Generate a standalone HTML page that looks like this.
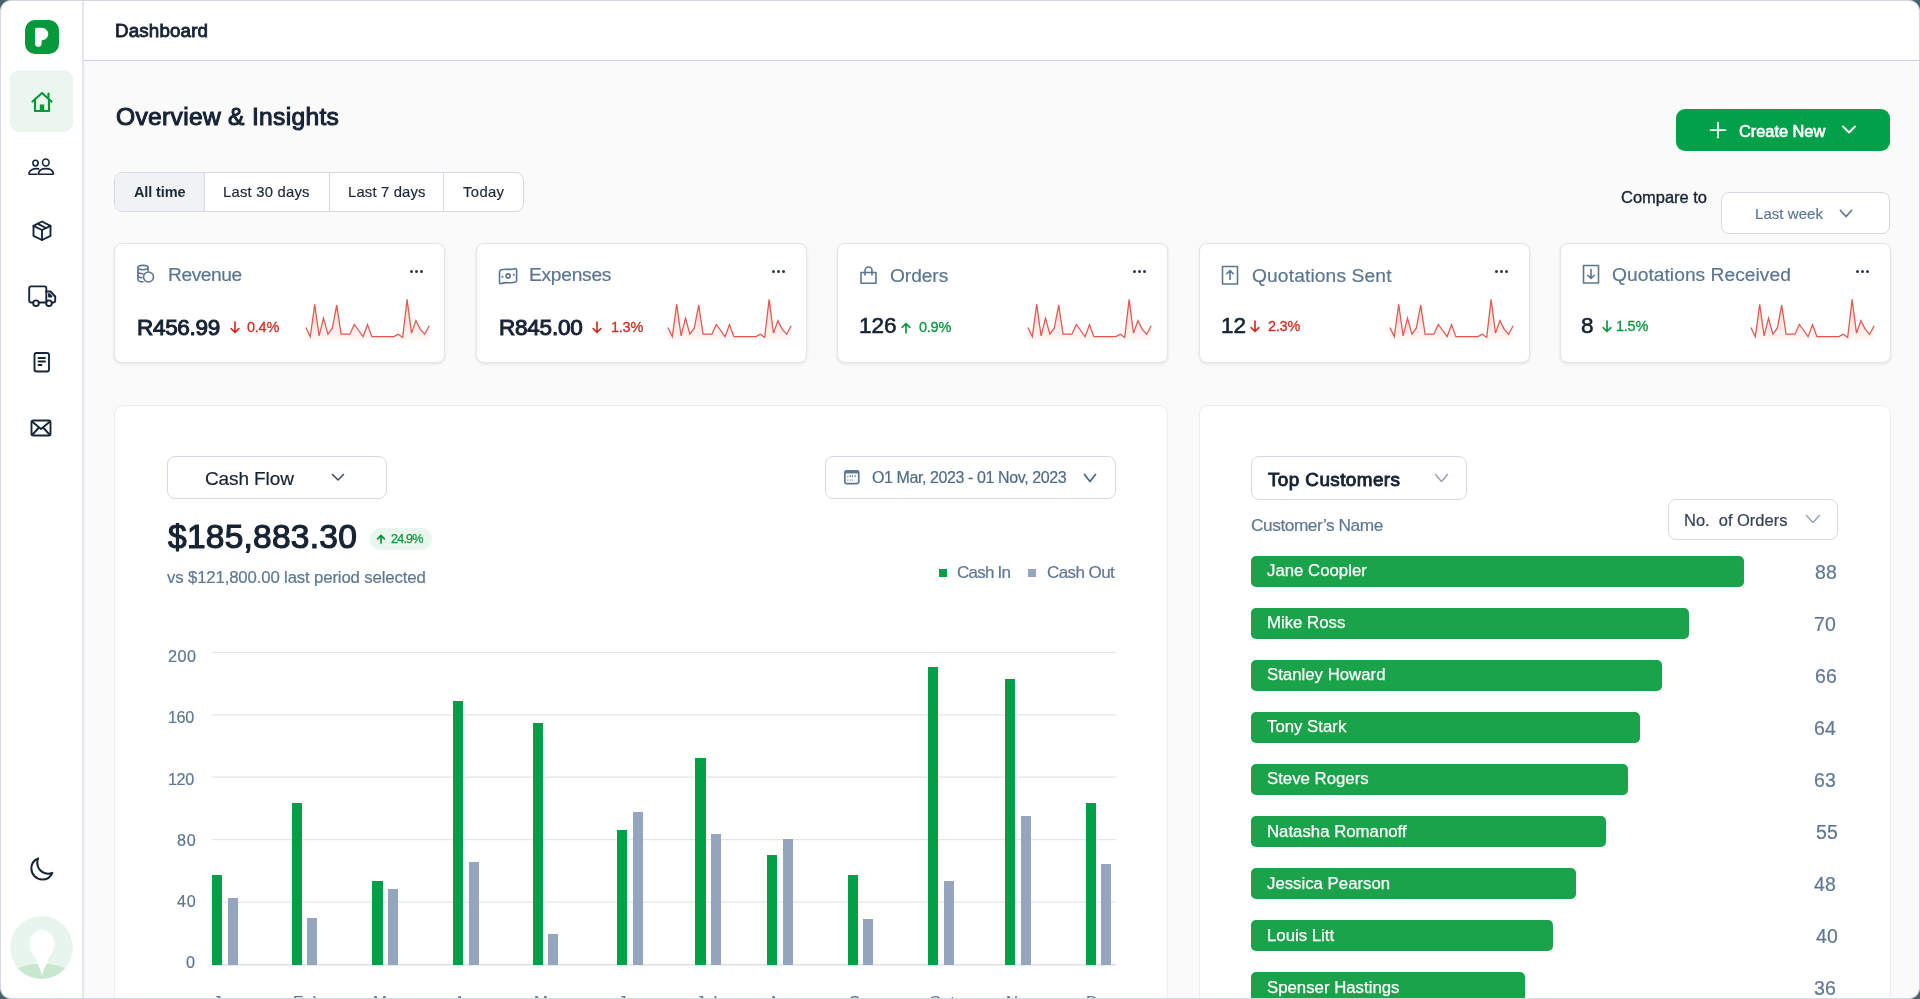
<!DOCTYPE html>
<html><head><meta charset="utf-8"><title>Dashboard</title>
<style>
html,body{margin:0;padding:0;width:1920px;height:999px;overflow:hidden;background:#4b636b;}
body{position:relative;font-family:"Liberation Sans",sans-serif;}
.b,.t,.s{position:absolute;}
.t{white-space:nowrap;will-change:transform;-webkit-text-stroke:0.2px currentColor;}
#clip{position:absolute;left:0;top:0;width:1920px;height:999px;overflow:hidden;border-radius:11px;}
</style></head><body>
<div id="clip">
<div class="b" style="left:0px;top:0px;width:1920px;height:999px;background:#fafafb;border:1px solid #d3d8e0;border-radius:11px;box-sizing:border-box;overflow:hidden;"></div>
<div class="b" style="left:1px;top:1px;width:81px;height:997px;background:#fff;border-top-left-radius:10px;border-bottom-left-radius:10px;"></div>
<div class="b" style="left:82px;top:1px;width:2px;height:997px;background:#e3e6ec;"></div>
<div class="b" style="left:84px;top:1px;width:1835px;height:59px;background:#fff;border-top-right-radius:10px;"></div>
<div class="b" style="left:84px;top:60px;width:1835px;height:1px;background:#ccd2dc;"></div>
<div class="t " style="left:115.42px;top:19.39px;font-size:18.8px;line-height:23px;color:#172335;font-weight:400;letter-spacing:0.146px;-webkit-text-stroke:0.85px #172335;">Dashboard</div>
<div class="b" style="left:25px;top:20px;width:34px;height:34px;background:#07983c;border-radius:10px;"></div>
<svg class="s" style="left:25px;top:20px" width="34" height="34" viewBox="0 0 34 34"><path d="M10 9.8 Q10 7.8 12 7.8 H17 A6.25 6.25 0 0 1 17 20.3 H16.6 V23.6 A3.3 3.3 0 0 1 10 23.6 Z" fill="#fff"/></svg>
<div class="b" style="left:10px;top:70px;width:63px;height:62px;background:#eaf6ee;border-radius:9px;"></div>
<svg class="s" style="left:29px;top:89px" width="26" height="26" viewBox="0 0 26 26"><g stroke="#07983c" stroke-width="2.2" stroke-linecap="round" stroke-linejoin="round" fill="none"><path d="M3.5 12.5 L13 4 L22.5 12.5"/><path d="M6 10.5 V22 H20 V10.5"/><path d="M19.5 8 V4.5"/></g><rect x="10.8" y="15.5" width="4.4" height="6.5" fill="#07983c"/></svg>
<svg class="s" style="left:27px;top:156px" width="28" height="22" viewBox="0 0 28 22"><g stroke="#16253a" stroke-width="1.6" stroke-linecap="round" stroke-linejoin="round" fill="none"><ellipse cx="8.5" cy="7.1" rx="2.6" ry="2.85"/><ellipse cx="18.8" cy="6.5" rx="3.3" ry="3.55"/><path d="M11.6 12.9 C7 11.8 2.5 14 1.9 17.3 Q1.8 18.3 3 18.3 H9.8"/><path d="M11.4 17.5 C12 14.3 15 12.6 18.8 12.6 C22.6 12.6 25.8 14.3 26.5 17.5 Q26.6 18.2 25.8 18.2 H12.2 Q11.3 18.2 11.4 17.5 Z"/></g></svg>
<svg class="s" style="left:30px;top:219px" width="24" height="24" viewBox="0 0 24 24"><g stroke="#16253a" stroke-width="1.9" stroke-linecap="round" stroke-linejoin="round" fill="none"><path d="M12 2.5 L20.5 6.8 V16.8 L12 21 L3.5 16.8 V6.8 Z"/><path d="M3.5 6.8 L12 11 L20.5 6.8"/><path d="M12 11 V21"/><path d="M7.5 4.6 L16 9"/></g></svg>
<svg class="s" style="left:27px;top:284px" width="31" height="24" viewBox="0 0 31 24"><g stroke="#16253a" stroke-width="1.9" stroke-linecap="round" stroke-linejoin="round" fill="none"><path d="M5.5 18.5 H4 a1.8 1.8 0 0 1 -1.8 -1.8 V4.2 a1.8 1.8 0 0 1 1.8 -1.8 H17.5 a1.8 1.8 0 0 1 1.8 1.8 V18.5 H12.5"/><path d="M19.3 7.5 H23.5 L28.2 12.5 V16.7 a1.8 1.8 0 0 1 -1.8 1.8 H25.5"/><circle cx="9" cy="19.2" r="2.8"/><circle cx="22" cy="19.2" r="2.8"/><path d="M22 10 L24.5 12.5 H22 Z"/></g></svg>
<svg class="s" style="left:31px;top:350px" width="22" height="24" viewBox="0 0 22 24"><g stroke="#16253a" stroke-width="1.9" stroke-linecap="round" stroke-linejoin="round" fill="none"><rect x="3.5" y="3" width="14.5" height="18.5" rx="2"/><path d="M7.5 8 H14"/><path d="M7.5 11.5 H14"/><path d="M7.5 15 H10.5"/></g></svg>
<svg class="s" style="left:29px;top:417px" width="24" height="22" viewBox="0 0 24 22"><g stroke="#16253a" stroke-width="1.9" stroke-linecap="round" stroke-linejoin="round" fill="none"><rect x="2.5" y="3.5" width="19" height="15" rx="2"/><path d="M3 4.5 L12 12 L21 4.5"/><path d="M3 18 L9.5 11"/><path d="M21 18 L14.5 11"/></g></svg>
<svg class="s" style="left:27.6px;top:856.4px" width="26.9" height="26.9" viewBox="0 0 24 24"><path d="M21.752 15.002A9.718 9.718 0 0 1 18 15.75c-5.385 0-9.75-4.365-9.75-9.75 0-1.33.266-2.597.748-3.752A9.753 9.753 0 0 0 3 11.25C3 16.635 7.365 21 12.75 21a9.753 9.753 0 0 0 9.002-5.998Z" stroke="#16253a" stroke-width="1.8" stroke-linecap="round" stroke-linejoin="round" fill="none"/></svg>
<svg class="s" style="left:10px;top:916px" width="63" height="63" viewBox="0 0 63 63"><defs><clipPath id="ac"><circle cx="31.5" cy="31.5" r="31.3"/></clipPath></defs><g clip-path="url(#ac)"><rect width="63" height="63" fill="#e8f5ec"/><ellipse cx="31.5" cy="74" rx="42" ry="26.5" fill="#c8e7d1"/><path d="M32 14 C24 14 19.8 20.5 19.8 28 C19.8 35 23.5 40 27 43.5 C26 45 25.5 46.5 27.5 48.5 C29.5 51 31 55 32 60 C33 55 34.5 51 36.5 48.5 C38.5 46.5 38 45 37 43.5 C40.5 40 44.2 35 44.2 28 C44.2 20.5 40 14 32 14 Z" fill="#fff"/></g></svg>
<div class="t " style="left:115.53px;top:102.18px;font-size:24.6px;line-height:30px;color:#172335;font-weight:400;letter-spacing:0.308px;-webkit-text-stroke:1.05px #172335;">Overview &amp; Insights</div>
<div class="b" style="left:114px;top:172px;width:410px;height:40px;background:#fff;border:1px solid #d5dae2;border-radius:8px;box-sizing:border-box;overflow:hidden;"></div>
<div class="b" style="left:115px;top:173px;width:89px;height:38px;background:#f0f2f5;border-top-left-radius:7px;border-bottom-left-radius:7px;"></div>
<div class="b" style="left:204px;top:173px;width:1px;height:38px;background:#d5dae2;"></div>
<div class="b" style="left:329px;top:173px;width:1px;height:38px;background:#d5dae2;"></div>
<div class="b" style="left:443px;top:173px;width:1px;height:38px;background:#d5dae2;"></div>
<div class="t " style="left:133.50px;top:183.88px;font-size:14.5px;line-height:17px;color:#1d2939;font-weight:700;letter-spacing:-0.126px;-webkit-text-stroke:0;">All time</div>
<div class="t " style="left:223.40px;top:183.27px;font-size:14.8px;line-height:18px;color:#1d2939;font-weight:400;letter-spacing:0.235px;">Last 30 days</div>
<div class="t " style="left:347.50px;top:183.27px;font-size:14.8px;line-height:18px;color:#1d2939;font-weight:400;letter-spacing:0.180px;">Last 7 days</div>
<div class="t " style="left:462.50px;top:183.27px;font-size:14.8px;line-height:18px;color:#1d2939;font-weight:400;letter-spacing:0.380px;">Today</div>
<div class="b" style="left:1676px;top:109px;width:214px;height:42px;background:#03a04a;border-radius:9px;"></div>
<svg class="s" style="left:1709px;top:121px" width="18" height="18" viewBox="0 0 18 18"><path d="M9 1.5 V16.5 M1.5 9 H16.5" stroke="#fff" stroke-width="1.75" stroke-linecap="round"/></svg>
<div class="t " style="left:1739.12px;top:120.72px;font-size:16.4px;line-height:20px;color:#fff;font-weight:400;letter-spacing:-0.031px;-webkit-text-stroke:0.65px #fff;">Create New</div>
<svg class="s" style="left:1841px;top:124px" width="16" height="12" viewBox="0 0 16 12"><path d="M2 2.5 L8 8.5 L14 2.5" stroke="#fff" stroke-width="2" fill="none" stroke-linecap="round" stroke-linejoin="round"/></svg>
<div class="t " style="left:1621.00px;top:187.08px;font-size:16.5px;line-height:20px;color:#172335;font-weight:400;letter-spacing:-0.024px;-webkit-text-stroke:0.35px #172335;">Compare to</div>
<div class="b" style="left:1721px;top:192px;width:169px;height:42px;background:#fff;border:1px solid #d5dae2;border-radius:8px;box-sizing:border-box;"></div>
<div class="t " style="left:1755.30px;top:204.70px;font-size:15px;line-height:18px;color:#5d7794;font-weight:400;letter-spacing:0.053px;">Last week</div>
<svg class="s" style="left:1839px;top:208.5px" width="14" height="9" viewBox="0 0 14 9"><path d="M1.5 1.5 L7.0 7.5 L12.5 1.5" stroke="#5d7794" stroke-width="1.8" fill="none" stroke-linecap="round" stroke-linejoin="round"/></svg>
<div class="b" style="left:114px;top:243px;width:331px;height:120px;background:#fff;border:1px solid #e3e6eb;border-radius:8px;box-sizing:border-box;box-shadow:0 1px 3px rgba(16,24,40,0.1);"></div>
<svg class="s" style="left:305.1px;top:297px" width="127" height="46" viewBox="0 0 127 46"><defs><linearGradient id="sg305.1" x1="0" y1="0" x2="0" y2="1"><stop offset="0" stop-color="#f04438" stop-opacity="0.26"/><stop offset="1" stop-color="#f04438" stop-opacity="0.04"/></linearGradient></defs><path d="M0.9 30.5 L5.3 39.6 L9.7 7.3 L14.1 38.9 L18.5 21.2 L22.9 37.2 L27.3 31.2 L31.7 8.2 L36.1 37.2 L40.5 37.2 L44.9 37.2 L49.3 27.5 L53.7 33.5 L58.1 39.6 L62.5 27.5 L66.9 39.6 L71.3 39.6 L75.7 39.6 L80.1 39.6 L84.5 39.6 L88.9 39.6 L93.3 37.2 L97.7 40.4 L102.1 2.4 L106.5 36.1 L110.9 23.5 L115.3 32.3 L119.7 37.2 L124.1 28.8 L124.1 43 L0.9 43 Z" fill="url(#sg305.1)"/><path d="M0.9 30.5 L5.3 39.6 L9.7 7.3 L14.1 38.9 L18.5 21.2 L22.9 37.2 L27.3 31.2 L31.7 8.2 L36.1 37.2 L40.5 37.2 L44.9 37.2 L49.3 27.5 L53.7 33.5 L58.1 39.6 L62.5 27.5 L66.9 39.6 L71.3 39.6 L75.7 39.6 L80.1 39.6 L84.5 39.6 L88.9 39.6 L93.3 37.2 L97.7 40.4 L102.1 2.4 L106.5 36.1 L110.9 23.5 L115.3 32.3 L119.7 37.2 L124.1 28.8" stroke="#e2564c" stroke-width="1.25" fill="none" stroke-linejoin="miter"/></svg>
<div class="b" style="left:410px;top:270px;width:3px;height:3px;background:#27364a;border-radius:50%;"></div>
<div class="b" style="left:415px;top:270px;width:3px;height:3px;background:#27364a;border-radius:50%;"></div>
<div class="b" style="left:420px;top:270px;width:3px;height:3px;background:#27364a;border-radius:50%;"></div>
<div class="b" style="left:476px;top:243px;width:331px;height:120px;background:#fff;border:1px solid #e3e6eb;border-radius:8px;box-sizing:border-box;box-shadow:0 1px 3px rgba(16,24,40,0.1);"></div>
<svg class="s" style="left:666.5px;top:297px" width="127" height="46" viewBox="0 0 127 46"><defs><linearGradient id="sg666.5" x1="0" y1="0" x2="0" y2="1"><stop offset="0" stop-color="#f04438" stop-opacity="0.26"/><stop offset="1" stop-color="#f04438" stop-opacity="0.04"/></linearGradient></defs><path d="M0.9 30.5 L5.3 39.6 L9.7 7.3 L14.1 38.9 L18.5 21.2 L22.9 37.2 L27.3 31.2 L31.7 8.2 L36.1 37.2 L40.5 37.2 L44.9 37.2 L49.3 27.5 L53.7 33.5 L58.1 39.6 L62.5 27.5 L66.9 39.6 L71.3 39.6 L75.7 39.6 L80.1 39.6 L84.5 39.6 L88.9 39.6 L93.3 37.2 L97.7 40.4 L102.1 2.4 L106.5 36.1 L110.9 23.5 L115.3 32.3 L119.7 37.2 L124.1 28.8 L124.1 43 L0.9 43 Z" fill="url(#sg666.5)"/><path d="M0.9 30.5 L5.3 39.6 L9.7 7.3 L14.1 38.9 L18.5 21.2 L22.9 37.2 L27.3 31.2 L31.7 8.2 L36.1 37.2 L40.5 37.2 L44.9 37.2 L49.3 27.5 L53.7 33.5 L58.1 39.6 L62.5 27.5 L66.9 39.6 L71.3 39.6 L75.7 39.6 L80.1 39.6 L84.5 39.6 L88.9 39.6 L93.3 37.2 L97.7 40.4 L102.1 2.4 L106.5 36.1 L110.9 23.5 L115.3 32.3 L119.7 37.2 L124.1 28.8" stroke="#e2564c" stroke-width="1.25" fill="none" stroke-linejoin="miter"/></svg>
<div class="b" style="left:772px;top:270px;width:3px;height:3px;background:#27364a;border-radius:50%;"></div>
<div class="b" style="left:777px;top:270px;width:3px;height:3px;background:#27364a;border-radius:50%;"></div>
<div class="b" style="left:782px;top:270px;width:3px;height:3px;background:#27364a;border-radius:50%;"></div>
<div class="b" style="left:837px;top:243px;width:331px;height:120px;background:#fff;border:1px solid #e3e6eb;border-radius:8px;box-sizing:border-box;box-shadow:0 1px 3px rgba(16,24,40,0.1);"></div>
<svg class="s" style="left:1027.1px;top:297px" width="127" height="46" viewBox="0 0 127 46"><defs><linearGradient id="sg1027.1" x1="0" y1="0" x2="0" y2="1"><stop offset="0" stop-color="#f04438" stop-opacity="0.26"/><stop offset="1" stop-color="#f04438" stop-opacity="0.04"/></linearGradient></defs><path d="M0.9 30.5 L5.3 39.6 L9.7 7.3 L14.1 38.9 L18.5 21.2 L22.9 37.2 L27.3 31.2 L31.7 8.2 L36.1 37.2 L40.5 37.2 L44.9 37.2 L49.3 27.5 L53.7 33.5 L58.1 39.6 L62.5 27.5 L66.9 39.6 L71.3 39.6 L75.7 39.6 L80.1 39.6 L84.5 39.6 L88.9 39.6 L93.3 37.2 L97.7 40.4 L102.1 2.4 L106.5 36.1 L110.9 23.5 L115.3 32.3 L119.7 37.2 L124.1 28.8 L124.1 43 L0.9 43 Z" fill="url(#sg1027.1)"/><path d="M0.9 30.5 L5.3 39.6 L9.7 7.3 L14.1 38.9 L18.5 21.2 L22.9 37.2 L27.3 31.2 L31.7 8.2 L36.1 37.2 L40.5 37.2 L44.9 37.2 L49.3 27.5 L53.7 33.5 L58.1 39.6 L62.5 27.5 L66.9 39.6 L71.3 39.6 L75.7 39.6 L80.1 39.6 L84.5 39.6 L88.9 39.6 L93.3 37.2 L97.7 40.4 L102.1 2.4 L106.5 36.1 L110.9 23.5 L115.3 32.3 L119.7 37.2 L124.1 28.8" stroke="#e2564c" stroke-width="1.25" fill="none" stroke-linejoin="miter"/></svg>
<div class="b" style="left:1133px;top:270px;width:3px;height:3px;background:#27364a;border-radius:50%;"></div>
<div class="b" style="left:1138px;top:270px;width:3px;height:3px;background:#27364a;border-radius:50%;"></div>
<div class="b" style="left:1143px;top:270px;width:3px;height:3px;background:#27364a;border-radius:50%;"></div>
<div class="b" style="left:1199px;top:243px;width:331px;height:120px;background:#fff;border:1px solid #e3e6eb;border-radius:8px;box-sizing:border-box;box-shadow:0 1px 3px rgba(16,24,40,0.1);"></div>
<svg class="s" style="left:1389.1px;top:297px" width="127" height="46" viewBox="0 0 127 46"><defs><linearGradient id="sg1389.1" x1="0" y1="0" x2="0" y2="1"><stop offset="0" stop-color="#f04438" stop-opacity="0.26"/><stop offset="1" stop-color="#f04438" stop-opacity="0.04"/></linearGradient></defs><path d="M0.9 30.5 L5.3 39.6 L9.7 7.3 L14.1 38.9 L18.5 21.2 L22.9 37.2 L27.3 31.2 L31.7 8.2 L36.1 37.2 L40.5 37.2 L44.9 37.2 L49.3 27.5 L53.7 33.5 L58.1 39.6 L62.5 27.5 L66.9 39.6 L71.3 39.6 L75.7 39.6 L80.1 39.6 L84.5 39.6 L88.9 39.6 L93.3 37.2 L97.7 40.4 L102.1 2.4 L106.5 36.1 L110.9 23.5 L115.3 32.3 L119.7 37.2 L124.1 28.8 L124.1 43 L0.9 43 Z" fill="url(#sg1389.1)"/><path d="M0.9 30.5 L5.3 39.6 L9.7 7.3 L14.1 38.9 L18.5 21.2 L22.9 37.2 L27.3 31.2 L31.7 8.2 L36.1 37.2 L40.5 37.2 L44.9 37.2 L49.3 27.5 L53.7 33.5 L58.1 39.6 L62.5 27.5 L66.9 39.6 L71.3 39.6 L75.7 39.6 L80.1 39.6 L84.5 39.6 L88.9 39.6 L93.3 37.2 L97.7 40.4 L102.1 2.4 L106.5 36.1 L110.9 23.5 L115.3 32.3 L119.7 37.2 L124.1 28.8" stroke="#e2564c" stroke-width="1.25" fill="none" stroke-linejoin="miter"/></svg>
<div class="b" style="left:1495px;top:270px;width:3px;height:3px;background:#27364a;border-radius:50%;"></div>
<div class="b" style="left:1500px;top:270px;width:3px;height:3px;background:#27364a;border-radius:50%;"></div>
<div class="b" style="left:1505px;top:270px;width:3px;height:3px;background:#27364a;border-radius:50%;"></div>
<div class="b" style="left:1560px;top:243px;width:331px;height:120px;background:#fff;border:1px solid #e3e6eb;border-radius:8px;box-sizing:border-box;box-shadow:0 1px 3px rgba(16,24,40,0.1);"></div>
<svg class="s" style="left:1749.9px;top:297px" width="127" height="46" viewBox="0 0 127 46"><defs><linearGradient id="sg1749.9" x1="0" y1="0" x2="0" y2="1"><stop offset="0" stop-color="#f04438" stop-opacity="0.26"/><stop offset="1" stop-color="#f04438" stop-opacity="0.04"/></linearGradient></defs><path d="M0.9 30.5 L5.3 39.6 L9.7 7.3 L14.1 38.9 L18.5 21.2 L22.9 37.2 L27.3 31.2 L31.7 8.2 L36.1 37.2 L40.5 37.2 L44.9 37.2 L49.3 27.5 L53.7 33.5 L58.1 39.6 L62.5 27.5 L66.9 39.6 L71.3 39.6 L75.7 39.6 L80.1 39.6 L84.5 39.6 L88.9 39.6 L93.3 37.2 L97.7 40.4 L102.1 2.4 L106.5 36.1 L110.9 23.5 L115.3 32.3 L119.7 37.2 L124.1 28.8 L124.1 43 L0.9 43 Z" fill="url(#sg1749.9)"/><path d="M0.9 30.5 L5.3 39.6 L9.7 7.3 L14.1 38.9 L18.5 21.2 L22.9 37.2 L27.3 31.2 L31.7 8.2 L36.1 37.2 L40.5 37.2 L44.9 37.2 L49.3 27.5 L53.7 33.5 L58.1 39.6 L62.5 27.5 L66.9 39.6 L71.3 39.6 L75.7 39.6 L80.1 39.6 L84.5 39.6 L88.9 39.6 L93.3 37.2 L97.7 40.4 L102.1 2.4 L106.5 36.1 L110.9 23.5 L115.3 32.3 L119.7 37.2 L124.1 28.8" stroke="#e2564c" stroke-width="1.25" fill="none" stroke-linejoin="miter"/></svg>
<div class="b" style="left:1856px;top:270px;width:3px;height:3px;background:#27364a;border-radius:50%;"></div>
<div class="b" style="left:1861px;top:270px;width:3px;height:3px;background:#27364a;border-radius:50%;"></div>
<div class="b" style="left:1866px;top:270px;width:3px;height:3px;background:#27364a;border-radius:50%;"></div>
<div class="t " style="left:167.50px;top:262.75px;font-size:19.2px;line-height:23px;color:#5b7593;font-weight:400;letter-spacing:-0.450px;">Revenue</div>
<div class="t " style="left:136.80px;top:314.20px;font-size:22.5px;line-height:27px;color:#172335;font-weight:400;letter-spacing:-0.308px;-webkit-text-stroke:1.0px #172335;">R456.99</div>
<svg class="s" style="left:229.8px;top:320.9px" width="10" height="14" viewBox="0 0 10 14"><path d="M5 1 V11.5 M1.2 7.7 L5 11.5 L8.8 7.7" stroke="#d42a20" stroke-width="1.65" fill="none" stroke-linecap="round" stroke-linejoin="round"/></svg>
<div class="t " style="left:247.10px;top:319.38px;font-size:14.5px;line-height:17px;color:#d42a20;font-weight:400;letter-spacing:-0.250px;-webkit-text-stroke:0.3px #d42a20;">0.4%</div>
<svg class="s" style="left:136px;top:264px" width="20" height="21" viewBox="0 0 20 21"><g stroke="#5b7593" stroke-width="1.6" fill="none" stroke-linecap="round" stroke-linejoin="round"><ellipse cx="7" cy="3.6" rx="5" ry="2.2"/><path d="M2 3.6 V15.5 C2 16.8 4 17.8 7 17.8"/><path d="M2 7.6 C2 8.9 4 9.8 7 9.8"/><path d="M2 11.6 C2 12.9 4 13.8 6 13.8"/><path d="M12 3.6 V7"/><circle cx="12.5" cy="13" r="5"/></g></svg>
<div class="t " style="left:529.40px;top:262.85px;font-size:19.2px;line-height:23px;color:#5b7593;font-weight:400;letter-spacing:-0.262px;">Expenses</div>
<div class="t " style="left:498.60px;top:314.20px;font-size:22.5px;line-height:27px;color:#172335;font-weight:400;letter-spacing:-0.225px;-webkit-text-stroke:1.0px #172335;">R845.00</div>
<svg class="s" style="left:591.7px;top:320.9px" width="10" height="14" viewBox="0 0 10 14"><path d="M5 1 V11.5 M1.2 7.7 L5 11.5 L8.8 7.7" stroke="#d42a20" stroke-width="1.65" fill="none" stroke-linecap="round" stroke-linejoin="round"/></svg>
<div class="t " style="left:610.50px;top:319.38px;font-size:14.5px;line-height:17px;color:#d42a20;font-weight:400;letter-spacing:-0.250px;-webkit-text-stroke:0.3px #d42a20;">1.3%</div>
<svg class="s" style="left:497.5px;top:265.5px" width="20" height="21" viewBox="0 0 20 21"><g stroke="#5b7593" stroke-width="1.6" fill="none" stroke-linecap="round" stroke-linejoin="round"><path d="M3.5 3.8 C7 2.4 12.5 4.4 16.5 2.7 Q18.6 2.2 18.6 4.3 V14.6 Q18.6 15.9 17 16.3 C13 17.6 7.5 15.6 3.5 17.4 Q1.5 18.2 1.5 16.3 V5.7 Q1.5 4.5 3.5 3.8 Z"/><circle cx="10.1" cy="9.9" r="2"/><path d="M4.4 10.8 H4.5 M15.8 8.8 H15.9" stroke-width="2"/></g></svg>
<div class="t " style="left:889.80px;top:264.25px;font-size:19.2px;line-height:23px;color:#5b7593;font-weight:400;letter-spacing:-0.071px;">Orders</div>
<div class="t " style="left:859.00px;top:311.60px;font-size:22.5px;line-height:27px;color:#172335;font-weight:400;-webkit-text-stroke:0.6px #172335;">126</div>
<svg class="s" style="left:900.8px;top:321.4px" width="10" height="14" viewBox="0 0 10 14"><path d="M5 12 V2.5 M1.2 6.3 L5 2.5 L8.8 6.3" stroke="#08973d" stroke-width="1.65" fill="none" stroke-linecap="round" stroke-linejoin="round"/></svg>
<div class="t " style="left:919.00px;top:319.38px;font-size:14.5px;line-height:17px;color:#08973d;font-weight:400;letter-spacing:-0.250px;-webkit-text-stroke:0.3px #08973d;">0.9%</div>
<svg class="s" style="left:859px;top:265.5px" width="20" height="21" viewBox="0 0 20 21"><g stroke="#5b7593" stroke-width="1.6" fill="none" stroke-linecap="round" stroke-linejoin="round"><path d="M2 6.5 H17 V17.2 H2 Z"/><path d="M6 9 V4.5 A3.5 3.5 0 0 1 13 4.5 V9"/></g></svg>
<div class="t " style="left:1251.70px;top:264.25px;font-size:19.2px;line-height:23px;color:#5b7593;font-weight:400;letter-spacing:0.135px;">Quotations Sent</div>
<div class="t " style="left:1220.60px;top:311.60px;font-size:22.5px;line-height:27px;color:#172335;font-weight:400;-webkit-text-stroke:0.6px #172335;">12</div>
<svg class="s" style="left:1250px;top:319.9px" width="10" height="14" viewBox="0 0 10 14"><path d="M5 1 V11.5 M1.2 7.7 L5 11.5 L8.8 7.7" stroke="#d42a20" stroke-width="1.65" fill="none" stroke-linecap="round" stroke-linejoin="round"/></svg>
<div class="t " style="left:1268.20px;top:318.38px;font-size:14.5px;line-height:17px;color:#d42a20;font-weight:400;letter-spacing:-0.250px;-webkit-text-stroke:0.3px #d42a20;">2.3%</div>
<svg class="s" style="left:1221px;top:265px" width="20" height="21" viewBox="0 0 20 21"><g stroke="#5b7593" stroke-width="1.6" fill="none" stroke-linecap="round" stroke-linejoin="round"><rect x="1.5" y="1.5" width="15" height="17.5"/><path d="M9 14.5 V5.5 M5.8 8.7 L9 5.5 L12.2 8.7"/></g></svg>
<div class="t " style="left:1612.20px;top:262.85px;font-size:19.2px;line-height:23px;color:#5b7593;font-weight:400;letter-spacing:0.043px;">Quotations Received</div>
<div class="t " style="left:1581.30px;top:311.60px;font-size:22.5px;line-height:27px;color:#172335;font-weight:400;-webkit-text-stroke:0.6px #172335;">8</div>
<svg class="s" style="left:1601.9px;top:319.9px" width="10" height="14" viewBox="0 0 10 14"><path d="M5 1 V11.5 M1.2 7.7 L5 11.5 L8.8 7.7" stroke="#08973d" stroke-width="1.65" fill="none" stroke-linecap="round" stroke-linejoin="round"/></svg>
<div class="t " style="left:1615.60px;top:318.38px;font-size:14.5px;line-height:17px;color:#08973d;font-weight:400;letter-spacing:-0.250px;-webkit-text-stroke:0.3px #08973d;">1.5%</div>
<svg class="s" style="left:1581.5px;top:264px" width="20" height="21" viewBox="0 0 20 21"><g stroke="#5b7593" stroke-width="1.6" fill="none" stroke-linecap="round" stroke-linejoin="round"><rect x="1.5" y="1.5" width="15" height="17.5"/><path d="M9 5.5 V14.5 M5.8 11.3 L9 14.5 L12.2 11.3"/></g></svg>
<div class="b" style="left:114px;top:405px;width:1054px;height:600px;background:#fff;border:1px solid #eceef2;border-radius:9px;box-sizing:border-box;"></div>
<div class="b" style="left:1199px;top:405px;width:692px;height:600px;background:#fff;border:1px solid #eceef2;border-radius:9px;box-sizing:border-box;"></div>
<div class="b" style="left:167px;top:456px;width:220px;height:43px;background:#fff;border:1px solid #d5dae2;border-radius:8px;box-sizing:border-box;"></div>
<div class="t " style="left:205.20px;top:466.62px;font-size:19px;line-height:23px;color:#172335;font-weight:400;letter-spacing:-0.103px;-webkit-text-stroke:0.2px #172335;">Cash Flow</div>
<svg class="s" style="left:331px;top:473.2px" width="14" height="8.5" viewBox="0 0 14 8.5"><path d="M1.5 1.5 L7.0 7.0 L12.5 1.5" stroke="#3b4a5e" stroke-width="1.5" fill="none" stroke-linecap="round" stroke-linejoin="round"/></svg>
<div class="t " style="left:167.97px;top:517.39px;font-size:33.5px;line-height:40px;color:#172335;font-weight:400;letter-spacing:0.251px;-webkit-text-stroke:1.15px #172335;">$185,883.30</div>
<div class="b" style="left:370px;top:528px;width:62px;height:22px;background:#e9f6ed;border-radius:11px;"></div>
<svg class="s" style="left:376px;top:534px" width="10" height="10" viewBox="0 0 10 10"><path d="M5 9 V1.6 M1.6 4.8 L5 1.4 L8.4 4.8" stroke="#08973d" stroke-width="1.7" fill="none" stroke-linecap="round" stroke-linejoin="round"/></svg>
<div class="t " style="left:391.00px;top:532.03px;font-size:12.6px;line-height:15px;color:#08973d;font-weight:400;letter-spacing:-0.800px;-webkit-text-stroke:0.25px #08973d;">24.9%</div>
<div class="t " style="left:167.40px;top:567.78px;font-size:16.8px;line-height:20px;color:#5d7794;font-weight:400;letter-spacing:-0.156px;">vs $121,800.00 last period selected</div>
<div class="b" style="left:825px;top:456px;width:291px;height:43px;background:#fff;border:1px solid #d5dae2;border-radius:8px;box-sizing:border-box;"></div>
<svg class="s" style="left:844px;top:469.8px" width="16" height="15" viewBox="0 0 16 15"><rect x="0.85" y="0.85" width="13.9" height="12.8" rx="1.6" fill="none" stroke="#5d7794" stroke-width="1.7"/><rect x="0.85" y="0.85" width="13.9" height="2.6" fill="#5d7794"/><g fill="#5d7794" opacity="0.85"><rect x="3.2" y="6" width="1.2" height="1.2"/><rect x="5.6" y="5" width="1.2" height="2.2"/><rect x="7.8" y="5" width="1.2" height="2.2"/><rect x="10.4" y="5" width="1.2" height="2.2"/><rect x="3.2" y="9.5" width="1.2" height="1.2"/><rect x="5.6" y="9.5" width="1.2" height="1.2"/><rect x="7.8" y="9.5" width="1.2" height="1.2"/></g></svg>
<div class="t " style="left:872.30px;top:468.26px;font-size:16.0px;line-height:19px;color:#4f6a88;font-weight:400;letter-spacing:-0.406px;">O1 Mar, 2023 - 01 Nov, 2023</div>
<svg class="s" style="left:1082.5px;top:472.5px" width="14" height="10" viewBox="0 0 14 10"><path d="M1.5 1.5 L7.0 8.5 L12.5 1.5" stroke="#4f6a88" stroke-width="1.8" fill="none" stroke-linecap="round" stroke-linejoin="round"/></svg>
<div class="b" style="left:938.5px;top:568.5px;width:8px;height:8px;background:#03a04a;"></div>
<div class="t " style="left:957.20px;top:563.21px;font-size:17px;line-height:20px;color:#5d7794;font-weight:400;letter-spacing:-0.768px;">Cash In</div>
<div class="b" style="left:1028px;top:568.5px;width:8px;height:8px;background:#94a6bd;"></div>
<div class="t " style="left:1046.90px;top:563.21px;font-size:17px;line-height:20px;color:#5d7794;font-weight:400;letter-spacing:-0.575px;">Cash Out</div>
<svg class="s" style="left:211.7px;top:640px" width="904" height="330" viewBox="0 0 904 330"><line x1="0" x2="904" y1="12.30" y2="12.30" stroke="#e2e6ec" stroke-width="1.3"/><line x1="0" x2="904" y1="74.80" y2="74.80" stroke="#e2e6ec" stroke-width="1.3"/><line x1="0" x2="904" y1="137.20" y2="137.20" stroke="#e2e6ec" stroke-width="1.3"/><line x1="0" x2="904" y1="199.70" y2="199.70" stroke="#e2e6ec" stroke-width="1.3"/><line x1="0" x2="904" y1="262.10" y2="262.10" stroke="#e2e6ec" stroke-width="1.3"/><line x1="0" x2="904" y1="324.80" y2="324.80" stroke="#e2e6ec" stroke-width="2"/></svg>
<div class="b" style="left:212.2px;top:875px;width:10.2px;height:90px;background:#00a046;"></div>
<div class="b" style="left:227.79999999999998px;top:898px;width:10.2px;height:67px;background:#94a6bd;"></div>
<div class="b" style="left:291.70000000000005px;top:803px;width:10.2px;height:162px;background:#00a046;"></div>
<div class="b" style="left:307.3px;top:918px;width:10.2px;height:47px;background:#94a6bd;"></div>
<div class="b" style="left:372.35px;top:881px;width:10.2px;height:84px;background:#00a046;"></div>
<div class="b" style="left:387.95px;top:889px;width:10.2px;height:76px;background:#94a6bd;"></div>
<div class="b" style="left:453.1px;top:701px;width:10.2px;height:264px;background:#00a046;"></div>
<div class="b" style="left:468.7px;top:862px;width:10.2px;height:103px;background:#94a6bd;"></div>
<div class="b" style="left:532.6px;top:723px;width:10.2px;height:242px;background:#00a046;"></div>
<div class="b" style="left:548.2px;top:934px;width:10.2px;height:31px;background:#94a6bd;"></div>
<div class="b" style="left:617.0px;top:830px;width:10.2px;height:135px;background:#00a046;"></div>
<div class="b" style="left:632.6px;top:812px;width:10.2px;height:153px;background:#94a6bd;"></div>
<div class="b" style="left:695.35px;top:758px;width:10.2px;height:207px;background:#00a046;"></div>
<div class="b" style="left:710.95px;top:834px;width:10.2px;height:131px;background:#94a6bd;"></div>
<div class="b" style="left:767.0px;top:855px;width:10.2px;height:110px;background:#00a046;"></div>
<div class="b" style="left:782.6px;top:839px;width:10.2px;height:126px;background:#94a6bd;"></div>
<div class="b" style="left:847.6px;top:875px;width:10.2px;height:90px;background:#00a046;"></div>
<div class="b" style="left:863.2px;top:919px;width:10.2px;height:46px;background:#94a6bd;"></div>
<div class="b" style="left:928.2px;top:667px;width:10.2px;height:298px;background:#00a046;"></div>
<div class="b" style="left:943.8000000000001px;top:881px;width:10.2px;height:84px;background:#94a6bd;"></div>
<div class="b" style="left:1005.1px;top:679px;width:10.2px;height:286px;background:#00a046;"></div>
<div class="b" style="left:1020.7px;top:816px;width:10.2px;height:149px;background:#94a6bd;"></div>
<div class="b" style="left:1085.5px;top:803px;width:10.2px;height:162px;background:#00a046;"></div>
<div class="b" style="left:1101.1000000000001px;top:864px;width:10.2px;height:101px;background:#94a6bd;"></div>
<div class="t " style="left:168.39px;top:647.29px;font-size:16.2px;line-height:19px;color:#5d7794;font-weight:400;letter-spacing:0.543px;">200</div>
<div class="t " style="left:168.39px;top:708.49px;font-size:16.2px;line-height:19px;color:#5d7794;font-weight:400;letter-spacing:-0.407px;">160</div>
<div class="t " style="left:168.39px;top:769.79px;font-size:16.2px;line-height:19px;color:#5d7794;font-weight:400;letter-spacing:-0.407px;">120</div>
<div class="t " style="left:177.38px;top:831.09px;font-size:16.2px;line-height:19px;color:#5d7794;font-weight:400;letter-spacing:0.677px;">80</div>
<div class="t " style="left:177.38px;top:892.09px;font-size:16.2px;line-height:19px;color:#5d7794;font-weight:400;letter-spacing:0.677px;">40</div>
<div class="t " style="left:186.41px;top:953.29px;font-size:16.2px;line-height:19px;color:#5d7794;font-weight:400;">0</div>
<div class="t " style="left:213.10px;top:993.21px;font-size:16.7px;line-height:20px;color:#5d7794;font-weight:400;">Jan</div>
<div class="t " style="left:292.60px;top:993.21px;font-size:16.7px;line-height:20px;color:#5d7794;font-weight:400;">Feb</div>
<div class="t " style="left:373.25px;top:993.21px;font-size:16.7px;line-height:20px;color:#5d7794;font-weight:400;">Mar</div>
<div class="t " style="left:454.00px;top:993.21px;font-size:16.7px;line-height:20px;color:#5d7794;font-weight:400;">Apr</div>
<div class="t " style="left:533.50px;top:993.21px;font-size:16.7px;line-height:20px;color:#5d7794;font-weight:400;">May</div>
<div class="t " style="left:617.90px;top:993.21px;font-size:16.7px;line-height:20px;color:#5d7794;font-weight:400;">Jun</div>
<div class="t " style="left:696.25px;top:993.21px;font-size:16.7px;line-height:20px;color:#5d7794;font-weight:400;">Jul</div>
<div class="t " style="left:767.90px;top:993.21px;font-size:16.7px;line-height:20px;color:#5d7794;font-weight:400;">Aug</div>
<div class="t " style="left:848.50px;top:993.21px;font-size:16.7px;line-height:20px;color:#5d7794;font-weight:400;">Sep</div>
<div class="t " style="left:929.10px;top:993.21px;font-size:16.7px;line-height:20px;color:#5d7794;font-weight:400;">Oct</div>
<div class="t " style="left:1006.00px;top:993.21px;font-size:16.7px;line-height:20px;color:#5d7794;font-weight:400;">Nov</div>
<div class="t " style="left:1086.40px;top:993.21px;font-size:16.7px;line-height:20px;color:#5d7794;font-weight:400;">Dec</div>
<div class="b" style="left:1251px;top:456px;width:216px;height:44px;background:#fff;border:1px solid #d5dae2;border-radius:8px;box-sizing:border-box;"></div>
<div class="t " style="left:1267.65px;top:467.55px;font-size:18.9px;line-height:23px;color:#172335;font-weight:400;letter-spacing:0.416px;-webkit-text-stroke:0.9px #172335;">Top Customers</div>
<svg class="s" style="left:1434px;top:473px" width="15" height="10" viewBox="0 0 15 10"><path d="M1.5 1.5 L7.5 8.5 L13.5 1.5" stroke="#98a6b8" stroke-width="1.6" fill="none" stroke-linecap="round" stroke-linejoin="round"/></svg>
<div class="t " style="left:1250.80px;top:514.71px;font-size:17.3px;line-height:21px;color:#5d7794;font-weight:400;letter-spacing:-0.450px;">Customer’s Name</div>
<div class="b" style="left:1668px;top:499px;width:170px;height:41px;background:#fff;border:1px solid #d5dae2;border-radius:8px;box-sizing:border-box;"></div>
<div class="t " style="left:1684.30px;top:510.08px;font-size:16.5px;line-height:20px;color:#344054;font-weight:400;letter-spacing:-0.017px;white-space:pre;">No.  of Orders</div>
<svg class="s" style="left:1805px;top:514px" width="16" height="10" viewBox="0 0 16 10"><path d="M1.5 1.5 L8.0 8.5 L14.5 1.5" stroke="#98a6b8" stroke-width="1.6" fill="none" stroke-linecap="round" stroke-linejoin="round"/></svg>
<div class="b" style="left:1251px;top:555.8px;width:493px;height:31px;background:#1aa34a;border-radius:5px;"></div>
<div class="t " style="left:1266.90px;top:561.28px;font-size:16.8px;line-height:20px;color:#fff;font-weight:400;-webkit-text-stroke:0.25px #fff;">Jane Coopler</div>
<div class="t " style="left:1815.40px;top:560.84px;font-size:19.5px;line-height:23px;color:#5d7794;font-weight:400;letter-spacing:0.106px;">88</div>
<div class="b" style="left:1251px;top:607.85px;width:438.2px;height:31px;background:#1aa34a;border-radius:5px;"></div>
<div class="t " style="left:1266.90px;top:613.33px;font-size:16.8px;line-height:20px;color:#fff;font-weight:400;-webkit-text-stroke:0.25px #fff;">Mike Ross</div>
<div class="t " style="left:1813.60px;top:612.89px;font-size:19.5px;line-height:23px;color:#5d7794;font-weight:400;letter-spacing:0.106px;">70</div>
<div class="b" style="left:1251px;top:659.9px;width:410.9px;height:31px;background:#1aa34a;border-radius:5px;"></div>
<div class="t " style="left:1266.90px;top:665.38px;font-size:16.8px;line-height:20px;color:#fff;font-weight:400;-webkit-text-stroke:0.25px #fff;">Stanley Howard</div>
<div class="t " style="left:1814.70px;top:664.94px;font-size:19.5px;line-height:23px;color:#5d7794;font-weight:400;letter-spacing:0.106px;">66</div>
<div class="b" style="left:1251px;top:711.95px;width:388.8px;height:31px;background:#1aa34a;border-radius:5px;"></div>
<div class="t " style="left:1266.90px;top:717.43px;font-size:16.8px;line-height:20px;color:#fff;font-weight:400;-webkit-text-stroke:0.25px #fff;">Tony Stark</div>
<div class="t " style="left:1813.60px;top:716.99px;font-size:19.5px;line-height:23px;color:#5d7794;font-weight:400;letter-spacing:0.106px;">64</div>
<div class="b" style="left:1251px;top:764.0px;width:377px;height:31px;background:#1aa34a;border-radius:5px;"></div>
<div class="t " style="left:1266.90px;top:769.48px;font-size:16.8px;line-height:20px;color:#fff;font-weight:400;-webkit-text-stroke:0.25px #fff;">Steve Rogers</div>
<div class="t " style="left:1813.60px;top:769.04px;font-size:19.5px;line-height:23px;color:#5d7794;font-weight:400;letter-spacing:0.106px;">63</div>
<div class="b" style="left:1251px;top:816.05px;width:355px;height:31px;background:#1aa34a;border-radius:5px;"></div>
<div class="t " style="left:1266.90px;top:821.53px;font-size:16.8px;line-height:20px;color:#fff;font-weight:400;-webkit-text-stroke:0.25px #fff;">Natasha Romanoff</div>
<div class="t " style="left:1815.50px;top:821.09px;font-size:19.5px;line-height:23px;color:#5d7794;font-weight:400;letter-spacing:0.106px;">55</div>
<div class="b" style="left:1251px;top:868.1px;width:325px;height:31px;background:#1aa34a;border-radius:5px;"></div>
<div class="t " style="left:1266.90px;top:873.58px;font-size:16.8px;line-height:20px;color:#fff;font-weight:400;-webkit-text-stroke:0.25px #fff;">Jessica Pearson</div>
<div class="t " style="left:1813.60px;top:873.14px;font-size:19.5px;line-height:23px;color:#5d7794;font-weight:400;letter-spacing:0.106px;">48</div>
<div class="b" style="left:1251px;top:920.15px;width:301.7px;height:31px;background:#1aa34a;border-radius:5px;"></div>
<div class="t " style="left:1266.90px;top:925.63px;font-size:16.8px;line-height:20px;color:#fff;font-weight:400;-webkit-text-stroke:0.25px #fff;">Louis Litt</div>
<div class="t " style="left:1815.50px;top:925.19px;font-size:19.5px;line-height:23px;color:#5d7794;font-weight:400;letter-spacing:0.106px;">40</div>
<div class="b" style="left:1251px;top:972.2px;width:274.4px;height:31px;background:#1aa34a;border-radius:5px;"></div>
<div class="t " style="left:1266.90px;top:977.68px;font-size:16.8px;line-height:20px;color:#fff;font-weight:400;-webkit-text-stroke:0.25px #fff;">Spenser Hastings</div>
<div class="t " style="left:1813.60px;top:977.24px;font-size:19.5px;line-height:23px;color:#5d7794;font-weight:400;letter-spacing:0.106px;">36</div>
</div>
<div class="b" style="left:0;top:0;width:1920px;height:999px;border:1px solid #d3d8e0;border-radius:11px;box-sizing:border-box;"></div>
</body></html>
